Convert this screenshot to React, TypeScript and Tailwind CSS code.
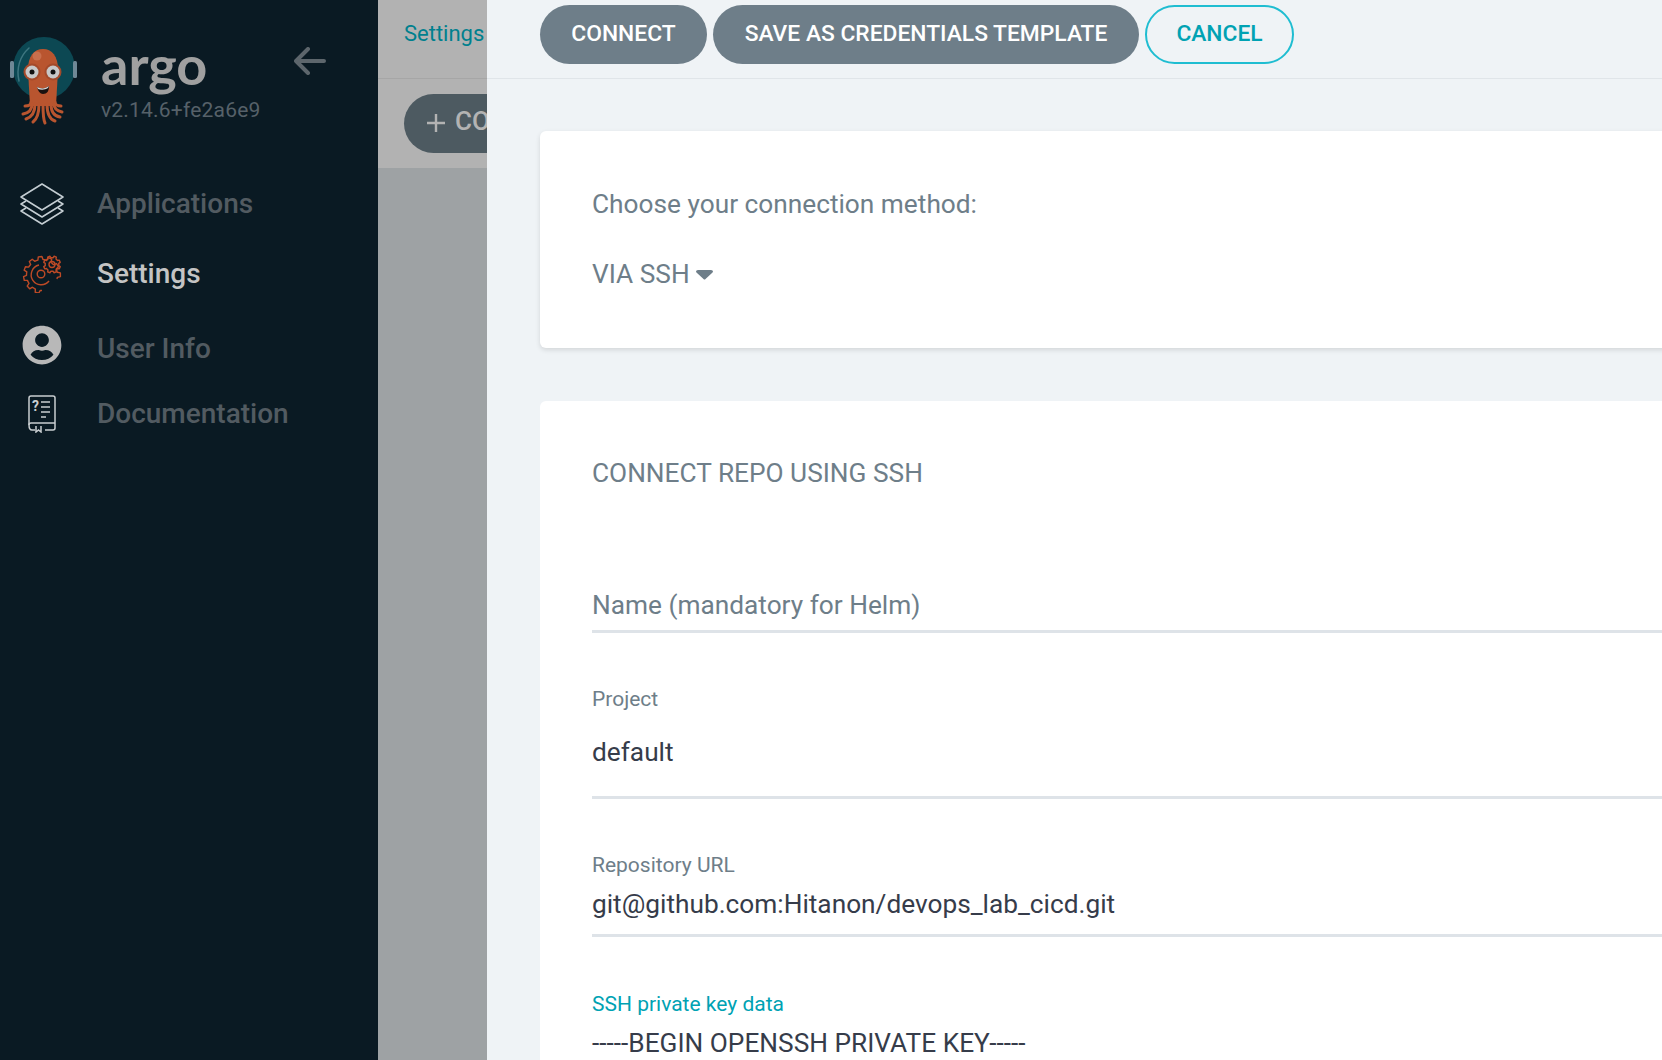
import { FaUserCircle } from 'react-icons/fa';

// outline of a toothed arc, angles in degrees
const gearPath = (cx: number, cy: number, outer: number, root: number, teeth: number, start: number, sweep: number) => {
  const point = (r: number, deg: number) => {
    const a = (deg * Math.PI) / 180;
    return `${(cx + r * Math.cos(a)).toFixed(2)} ${(cy + r * Math.sin(a)).toFixed(2)}`;
  };
  const step = sweep / teeth;
  let d = `M${point(root, start)}`;
  for (let i = 0; i < teeth; i += 1) {
    const s = start + i * step;
    d += `L${point(root, s + step * 0.2)}L${point(outer, s + step * 0.32)}L${point(outer, s + step * 0.68)}L${point(root, s + step * 0.8)}L${point(root, s + step)}`;
  }
  return d;
};

const ArgoLogo = () => (
  <svg width="68" height="90" viewBox="0 0 68 90" className="shrink-0">
    <circle cx="34" cy="32" r="31" fill="#0c4853" />
    <rect x="0" y="25" width="4" height="17" rx="1.5" fill="#6f8896" />
    <rect x="63" y="25" width="4" height="17" rx="1.5" fill="#6f8896" />
    <path d="M9 45C6 32 10 20 19 12" fill="none" stroke="#3e7680" strokeWidth="1.5" strokeLinecap="round" />
    <path d="M18 34C18 20 24 13 33 13C42 13 48 20 48 34L46 70L20 70Z" fill="#b9552f" />
    <circle cx="27" cy="20" r="4.5" fill="#c96f4d" />
    <g fill="none" stroke="#b9552f" strokeWidth="3" strokeLinecap="round">
      <path d="M21 66C21 69 19 70 15 70" />
      <path d="M22 68C22 73 19 77 13 78" />
      <path d="M25 68C25 76 22 81 16 83" />
      <path d="M29 68C29 77 27 83 23 86" />
      <path d="M33 68C33 77 33 83 35 87" />
      <path d="M37 68C37 77 39 83 45 85" />
      <path d="M41 68C41 75 44 80 50 81" />
      <path d="M44 68C44 72 47 75 52 76" />
      <path d="M45 66C45 68 47 70 51 70" />
    </g>
    <circle cx="22" cy="36" r="8.5" fill="#a44a2a" />
    <circle cx="43" cy="36" r="8.5" fill="#a44a2a" />
    <circle cx="22" cy="36" r="6.5" fill="#c8c8c8" />
    <circle cx="43" cy="36" r="6.5" fill="#c8c8c8" />
    <circle cx="22" cy="36" r="2.5" fill="#111" />
    <circle cx="43" cy="36" r="2.5" fill="#111" />
    <path d="M27 51C31 53 35 53 39 50C39 55 37 58 33 58C30 58 28 55 27 51Z" fill="#1a1210" />
    <path d="M27 51C31 53 35 53 39 50L38 52C35 54 31 54 28 53Z" fill="#d8d8d8" />
  </svg>
);

const LayersIcon = () => (
  <svg width="44" height="42" viewBox="0 0 44 42" fill="none" stroke="#c4cdd2" strokeWidth="1.5" strokeLinejoin="round">
    <path d="M22 1L43 14L22 27L1 14Z" />
    <path d="M6 18L1 21L22 34L43 21L38 18" />
    <path d="M6 25L1 28L22 41L43 28L38 25" />
  </svg>
);

const GearsIcon = () => (
  <svg width="40" height="38" viewBox="0 0 40 38" fill="none" stroke="#bd4a26" strokeWidth="1.4" strokeLinejoin="round">
    <path d={gearPath(20, 20, 18.5, 15.5, 9, 15, -285)} />
    <path d="M27 26A10 10 0 1 1 17 10" />
    <circle cx="19" cy="19" r="3.8" />
    <path d={`${gearPath(30, 9.5, 8.5, 6.8, 8, 0, 360)}Z`} />
    <circle cx="30" cy="9.5" r="3" />
  </svg>
);

const BookIcon = () => (
  <svg width="30" height="38" viewBox="0 0 30 38" fill="none" stroke="#c9ced1" strokeWidth="1.5">
    <path d="M2 30V3Q2 1 4 1H26Q28 1 28 3V33Q28 35 26 35H18" />
    <path d="M2 30Q2 28 4 28H28M2 30Q2 35 5 35H8" />
    <path d="M9 31V37L11.5 35L14 37V31" />
    <path d="M14 7H23M14 12H23M14 17H23M14 22H19" />
    <text x="5" y="16" fontSize="14" fontWeight="700" fill="#c9ced1" stroke="none" fontFamily="Roboto, sans-serif">?</text>
  </svg>
);

const navItems = [
  { label: 'Applications', icon: <LayersIcon />, height: 'h-[70px]', active: false },
  { label: 'Settings', icon: <GearsIcon />, height: 'h-[70px]', active: true },
  { label: 'User Info', icon: <FaUserCircle className="mb-[9px] text-[#b8b8b8] text-[40px]" />, height: 'h-[80px]', active: false },
  { label: 'Documentation', icon: <BookIcon />, height: 'h-[49px]', active: false },
];

const Sidebar = () => (
  <aside className="w-[378px] shrink-0 bg-[#0a1a23]">
    <div className="flex h-[169px] items-start pl-[10px] pt-[36px]">
      <ArgoLogo />
      <div className="ml-[23px] mt-[4px] flex flex-col">
        <span className="h-[58px] text-[54px] leading-[50px] font-bold text-[#a0a0a0] font-['Lato',sans-serif]">argo</span>
        <span className="text-[21px] leading-[24px] tracking-[0.2px] text-[#566169]">v2.14.6+fe2a6e9</span>
      </div>
      <svg width="32" height="28" viewBox="0 0 32 28" fill="none" stroke="#5d666c" strokeWidth="4" strokeLinecap="round" strokeLinejoin="round" className="ml-[33px] mt-[11px]">
        <path d="M30 14H3M14 2L2 14L14 26" />
      </svg>
    </div>
    <nav>
      {navItems.map((item) => (
        <div key={item.label} className={`flex items-center ${item.height}`}>
          <div className="flex w-[97px] shrink-0 justify-center pr-[13px]">{item.icon}</div>
          <span className={`text-[28px] font-medium ${item.active ? 'text-[#c4c4c4]' : 'text-[#525b61]'}`}>{item.label}</span>
        </div>
      ))}
    </nav>
  </aside>
);

const Backdrop = () => (
  <div className="w-[109px] shrink-0 overflow-hidden bg-[#9ea2a4]">
    <div className="h-[168px] bg-[#b2b2b2]">
      <div className="h-[79px] border-b border-[#a6a6a6] pl-[26px] pt-[20px] text-[22px] leading-[28px] text-[#00808e] whitespace-nowrap">Settings</div>
      <div className="pl-[26px] pt-[15px]">
        <div className="flex h-[59px] w-[200px] items-center rounded-[30px] bg-[#4d5a61] pb-[4px] pl-[22px] text-[26px] font-medium text-[#b3b3b3]">
          <svg width="20" height="20" viewBox="0 0 20 20" stroke="#b3b3b3" strokeWidth="2.4" className="mr-[9px] mt-[2px]">
            <path d="M10 1V19M1 10H19" />
          </svg>
          CO
        </div>
      </div>
    </div>
  </div>
);

const Panel = () => (
  <main className="min-w-0 flex-1 overflow-hidden bg-[#eff3f6]">
    <div className="flex h-[79px] items-start gap-[6px] border-b border-[#e0e5e9] pl-[53px] pt-[5px]">
      <button className="h-[59px] w-[167px] rounded-[30px] bg-[#6e7e89] text-[22.8px] font-medium text-white">CONNECT</button>
      <button className="h-[59px] w-[426px] rounded-[30px] bg-[#6e7e89] text-[22.8px] font-medium text-white">SAVE AS CREDENTIALS TEMPLATE</button>
      <button className="h-[59px] w-[149px] rounded-[30px] border-2 border-[#1fbdd1] text-[22.8px] font-medium text-[#00a2b3]">CANCEL</button>
    </div>
    <div className="w-[1300px] pl-[53px] pt-[52px]">
      <section className="h-[217px] rounded-[6px] bg-white pl-[52px] pt-[58px] shadow-[0_2px_5px_rgba(0,0,0,0.12)]">
        <p className="text-[26.25px] leading-[30px] text-[#6e7e89]">Choose your connection method:</p>
        <div className="mt-[40px] flex items-center text-[26.25px] leading-[30px] text-[#6e7e89]">
          VIA SSH
          <svg width="17" height="10" viewBox="0 0 17 10" className="ml-[6px] mt-[2px]">
            <path d="M0 1.5Q0 0 2 0H15Q17 0 17 1.5Q17 2 16 3L9.5 9Q8.5 10 7.5 9L1 3Q0 2 0 1.5Z" fill="#6e7e89" />
          </svg>
        </div>
      </section>
      <section className="mt-[53px] h-[900px] rounded-[6px] bg-white pl-[52px] pt-[57px]">
        <p className="text-[26.25px] leading-[30px] text-[#6e7e89]">CONNECT REPO USING SSH</p>
        <div className="mt-[99px] h-[46px] border-b-[3px] border-[#dee3e8] text-[26.25px] leading-[36px] text-[#6e7e89]">Name (mandatory for Helm)</div>
        <p className="mt-[54px] text-[21px] leading-[24px] text-[#6e7e89]">Project</p>
        <div className="mt-[23px] h-[65px] border-b-[3px] border-[#dee3e8] text-[26.25px] leading-[36px] text-[#363c4a]">default</div>
        <p className="mt-[54px] text-[21px] leading-[24px] text-[#6e7e89]">Repository URL</p>
        <div className="mt-[9px] h-[51px] border-b-[3px] border-[#dee3e8] text-[26.25px] leading-[36px] text-[#363c4a]">git@github.com:Hitanon/devops_lab_cicd.git</div>
        <p className="mt-[55px] text-[21px] leading-[24px] text-[#00a2b3]">SSH private key data</p>
        <div className="mt-[9px] text-[26.25px] leading-[36px] text-[#363c4a]">-----BEGIN OPENSSH PRIVATE KEY-----</div>
      </section>
    </div>
  </main>
);

const App = () => (
  <div className="flex h-[1060px] w-[1662px] overflow-hidden font-['Roboto',sans-serif]">
    <Sidebar />
    <Backdrop />
    <Panel />
  </div>
);

export default App;
